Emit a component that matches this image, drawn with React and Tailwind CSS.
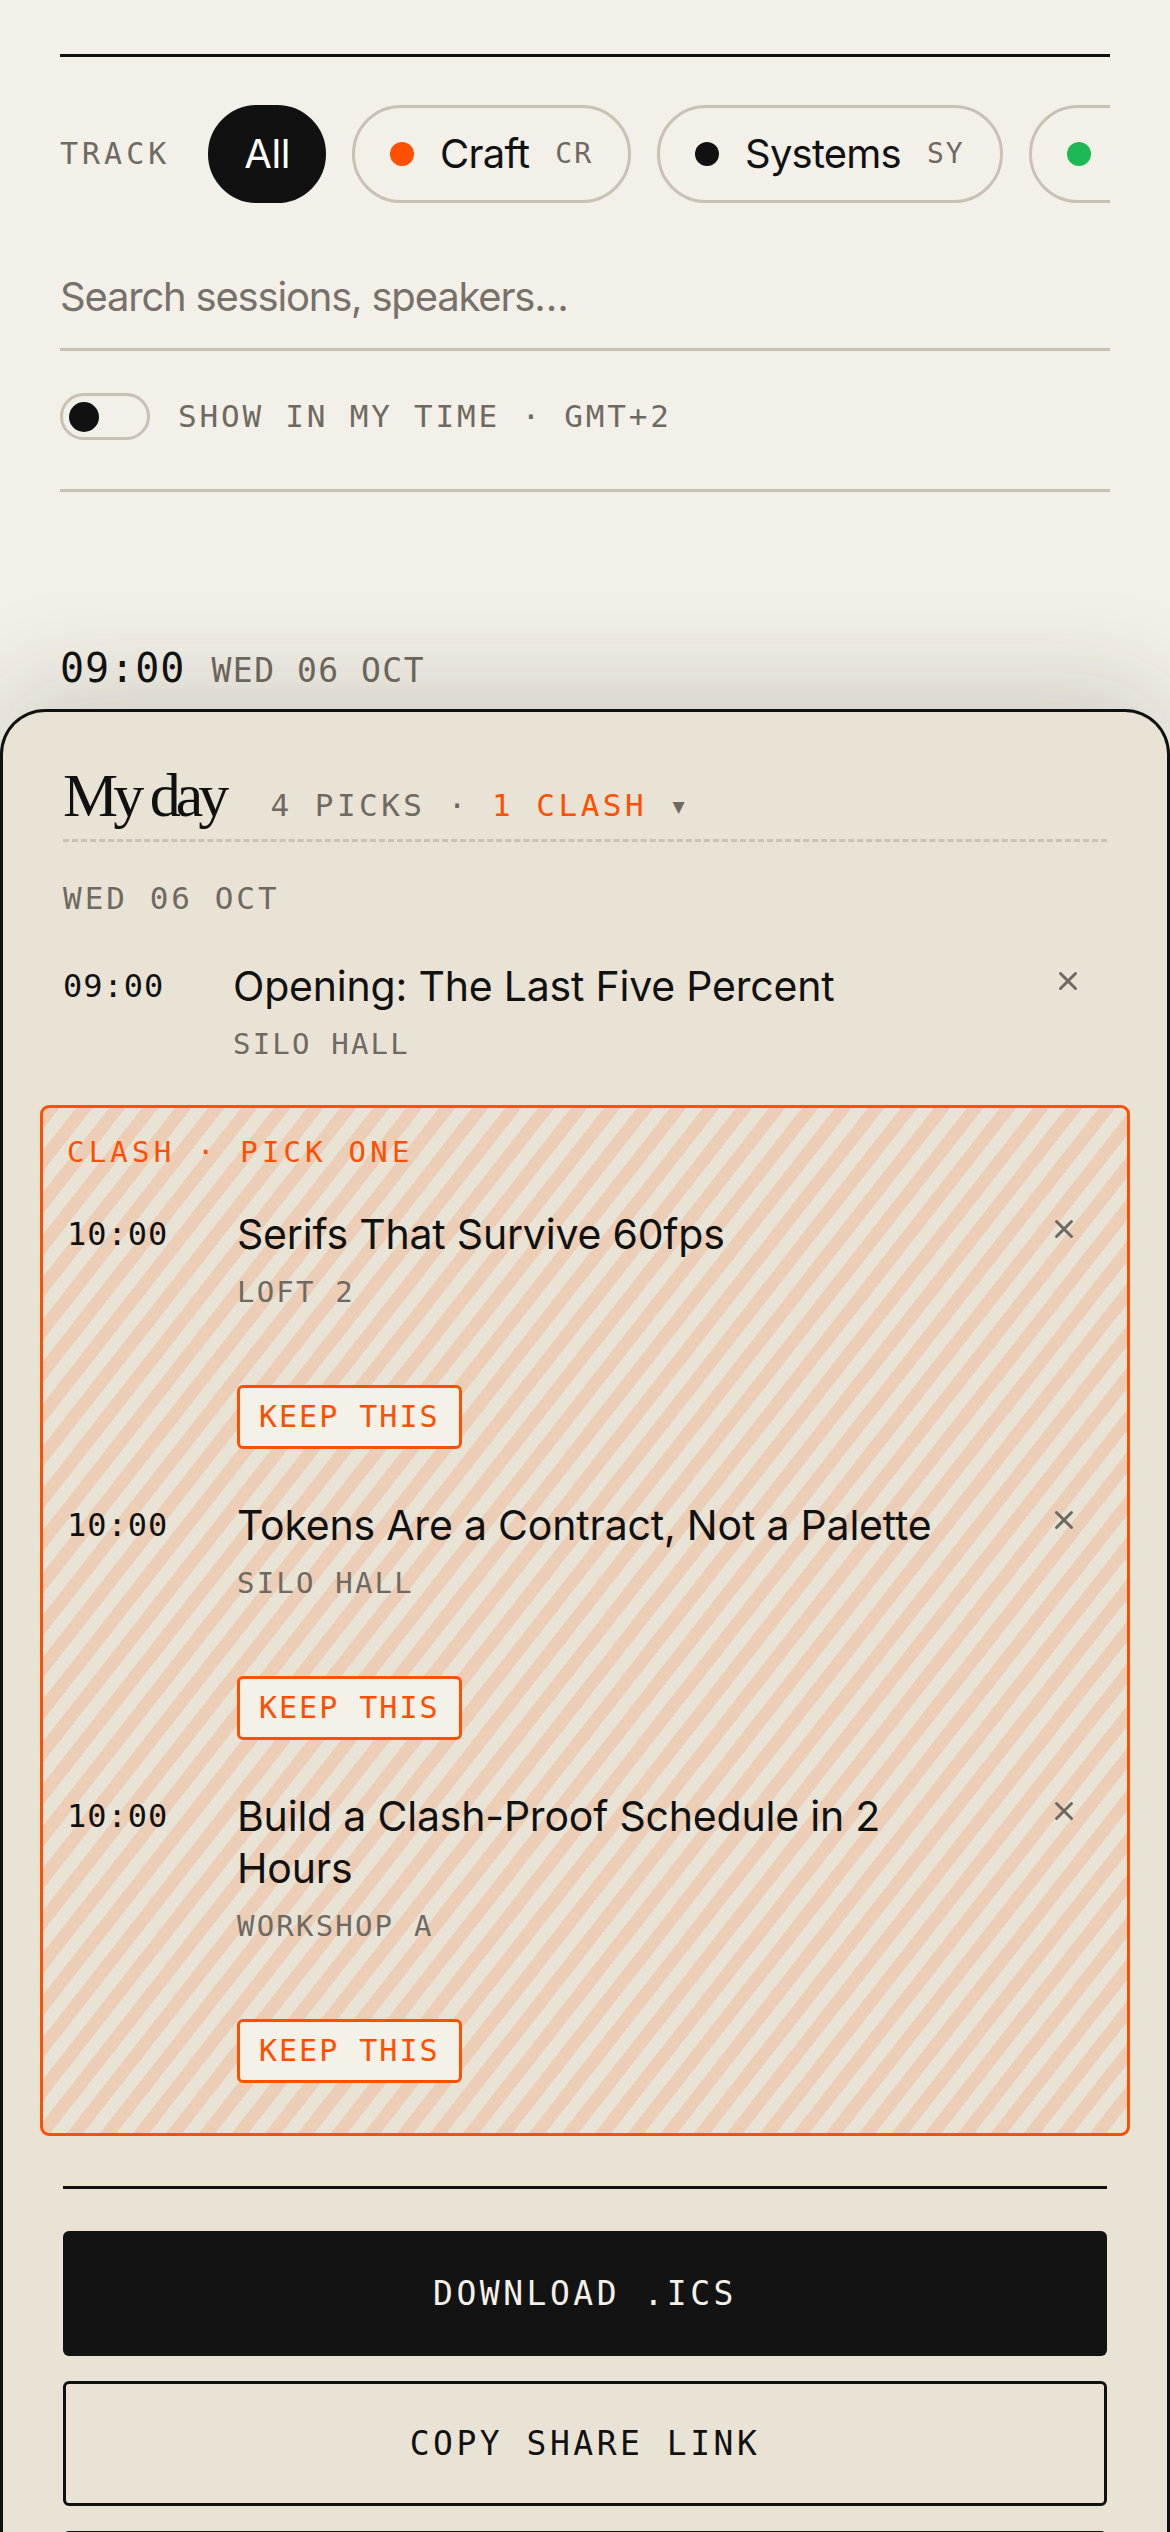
import React from 'react';
import { X } from 'lucide-react';

const sans = "font-['Inter',sans-serif]";
const mono = "font-['DejaVu_Sans_Mono','Liberation_Mono',monospace]";
const serif = "font-['Liberation_Serif',serif]";

const tracks = [
  { name: 'Craft', code: 'CR', dot: 'bg-[#ff4f00]' },
  { name: 'Systems', code: 'SY', dot: 'bg-[#111111]' },
  { name: 'Research', code: 'RS', dot: 'bg-[#1db954]' },
];

const clashPicks = [
  { time: '10:00', title: 'Serifs That Survive 60fps', room: 'LOFT 2' },
  { time: '10:00', title: 'Tokens Are a Contract, Not a Palette', room: 'SILO HALL' },
  { time: '10:00', title: 'Build a Clash-Proof Schedule in 2 Hours', room: 'WORKSHOP A' },
];

const PickRow = ({ time, title, room, clash, className = '' }) => (
  <div className={`grid grid-cols-[146px_1fr_78px] gap-x-[24px] ${className}`}>
    <div className={`${mono} text-[32px] leading-[52px] tracking-[1px] text-[#111]`}>{time}</div>
    <div className="min-w-0">
      <h3 className={`${sans} pr-[40px] text-[41px] leading-[52px] tracking-[-0.005em] text-[#111]`}>{title}</h3>
      <p className={`${mono} mt-[18px] text-[29px] leading-none tracking-[2.2px] text-[#6f6a61]`}>{room}</p>
      {clash && (
        <button
          type="button"
          className={`${mono} mt-[78px] rounded-[6px] border-[3px] border-[#ff4f00] bg-[#f4f1e9] px-[19px] py-[14px] text-[30px] leading-none tracking-[2px] text-[#ff4f00]`}
        >
          KEEP THIS
        </button>
      )}
    </div>
    <div className="flex h-[42px] items-center justify-center text-[#6f6a61]">
      <X size={30} strokeWidth={2.4} />
    </div>
  </div>
);

export default function App() {
  return (
    <div className="flex h-[2532px] flex-col overflow-hidden bg-[#f3f0e9]">
      <div className="px-[60px] pt-[54px]">
        <div className="border-t-[3px] border-[#111]" />

        {/* track filter */}
        <div className="mt-[48px] flex items-center gap-[26px] overflow-hidden">
          <span className={`${mono} mr-[12px] shrink-0 text-[30px] leading-none tracking-[4px] text-[#6f6a61]`}>TRACK</span>
          <button
            type="button"
            className={`${sans} h-[98px] shrink-0 rounded-full border-[3px] border-[#111] bg-[#111] px-[33px] text-[40px] tracking-[-0.01em] text-white`}
          >
            All
          </button>
          {tracks.map((t) => (
            <button
              key={t.code}
              type="button"
              className="flex h-[98px] shrink-0 items-center gap-[26px] rounded-full border-[3px] border-[#c8c1b4] px-[35px]"
            >
              <span className={`h-[24px] w-[24px] rounded-full ${t.dot}`} />
              <span className={`${sans} text-[40px] tracking-[-0.02em] text-[#111]`}>{t.name}</span>
              <span className={`${mono} text-[28px] tracking-[2px] text-[#6f6a61]`}>{t.code}</span>
            </button>
          ))}
        </div>

        <input
          type="text"
          placeholder="Search sessions, speakers…"
          className={`${sans} mt-[46px] block w-full border-b-[3px] border-[#c8c1b4] bg-transparent pt-[24px] pb-[27px] text-[40px] leading-[48px] tracking-[-0.03em] text-[#111] outline-none placeholder:text-[#77716a]`}
        />

        <div className="flex items-center gap-[28px] border-b-[3px] border-[#c8c1b4] pt-[42px] pb-[49px]">
          <div className="flex h-[47px] w-[90px] items-center rounded-full border-[3px] border-[#c8c1b4] px-[6px]">
            <span className="h-[30px] w-[30px] rounded-full bg-[#111]" />
          </div>
          <span className={`${mono} text-[31px] leading-none tracking-[2.8px] text-[#6f6a61]`}>SHOW IN MY TIME · GMT+2</span>
        </div>

        <div className="mt-[156px] flex items-baseline gap-[26px]">
          <span className={`${mono} text-[40px] leading-none tracking-[1px] text-[#111]`}>09:00</span>
          <span className={`${mono} text-[33px] leading-none tracking-[1.5px] text-[#6f6a61]`}>WED 06 OCT</span>
        </div>
      </div>

      {/* my day sheet */}
      <div className="mt-[21px] flex-1 rounded-t-[45px] border-[3px] border-b-0 border-[#111] bg-[#e9e3d6] px-[60px] pt-[52px] shadow-[0_-24px_100px_rgba(40,30,10,0.16)]">
        <div className="flex items-baseline gap-[46px] border-b-[3px] border-dashed border-[#c9c2b5] pb-[13px]">
          <h2 className={`${serif} text-[62px] leading-none tracking-[-0.08em] text-[#111]`}>My day</h2>
          <span className={`${mono} text-[31px] leading-none tracking-[3.5px] text-[#6f6a61]`}>
            4 PICKS · <span className="text-[#ff4f00]">1 CLASH</span> ▾
          </span>
        </div>

        <p className={`${mono} mt-[41px] text-[31px] leading-none tracking-[3px] text-[#6f6a61]`}>WED 06 OCT</p>

        <PickRow className="mt-[46px]" time="09:00" title="Opening: The Last Five Percent" room="SILO HALL" />

        <div className="-mx-[23px] mt-[46px] rounded-[9px] border-[3px] border-[#ff4f00] bg-[repeating-linear-gradient(128deg,rgba(255,79,0,0.15)_0_13px,transparent_13px_26px)] px-[24px] pt-[30px] pb-[50px]">
          <p className={`${mono} text-[29px] leading-none tracking-[4.2px] text-[#ff4f00]`}>CLASH · PICK ONE</p>
          {clashPicks.map((p, i) => (
            <PickRow key={p.title} className={i === 0 ? 'mt-[41px]' : 'mt-[50px]'} clash {...p} />
          ))}
        </div>

        <div className="mt-[50px] h-[3px] bg-[#111]" />

        <div className="mt-[42px] flex flex-col gap-[25px]">
          <button type="button" className={`${mono} h-[125px] rounded-[6px] bg-[#131313] text-[33px] tracking-[3.5px] text-[#f3f0e9]`}>
            DOWNLOAD .ICS
          </button>
          <button type="button" className={`${mono} h-[125px] rounded-[6px] border-[3px] border-[#111] text-[33px] tracking-[3.5px] text-[#111]`}>
            COPY SHARE LINK
          </button>
          <button type="button" className={`${mono} h-[125px] rounded-[6px] border-[3px] border-[#111] text-[33px] tracking-[3.5px] text-[#111]`}>
            EMAIL ME THE PLAN
          </button>
        </div>
      </div>
    </div>
  );
}
